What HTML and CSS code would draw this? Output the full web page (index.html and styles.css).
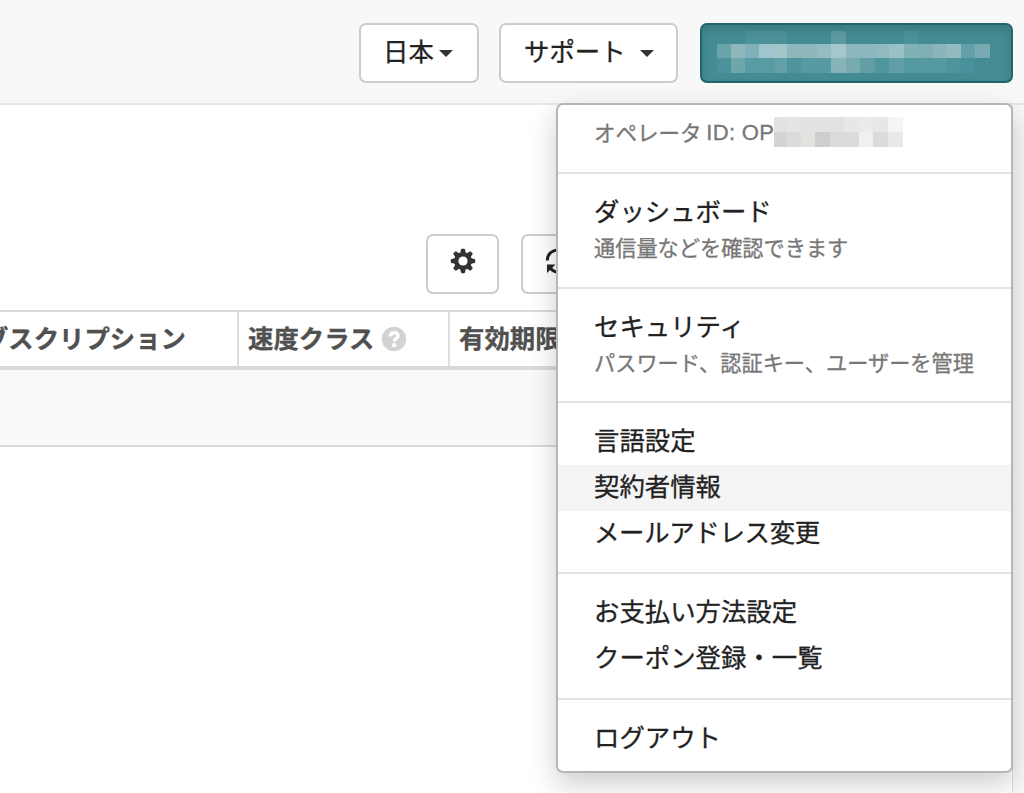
FILE: index.html
```
<!DOCTYPE html>
<html lang="ja">
<head>
<meta charset="utf-8">
<title>ユーザーコンソール</title>
<link rel="stylesheet" href="styles.css">
</head>
<body>
<div class="page">
  <header class="topbar">
    <button class="btn btn-lang">日本<span class="caret"></span></button>
    <button class="btn btn-support">サポート<span class="caret"></span></button>
    <button class="btn btn-account" aria-label="アカウント">
      <svg width="311" height="58" viewBox="0 0 311 58" shape-rendering="crispEdges">
        <g fill="#fff">
          <path opacity=".05" d="M43 7h43v13H43zM203 7h14v13h-14z"/>
          <path opacity=".13" d="M130 7h15v13h-15z"/>
        </g>
        <g>
          <path fill="#69a4ab" d="M15 20h14v14H15z"/><path fill="#8eb7bb" d="M29 20h14v14H29z"/>
          <path fill="#80b1b8" d="M43 20h14v14H43z"/><path fill="#a0c5ce" d="M57 20h15v14H57z"/>
          <path fill="#a3c6ca" d="M72 20h14v14H72z"/><path fill="#8eb7bc" d="M86 20h30v14H86z"/>
          <path fill="#94bcc2" d="M116 20h14v14h-14z"/><path fill="#a5c6cb" d="M130 20h15v14h-15z"/>
          <path fill="#8db7bf" d="M145 20h29v14h-29z"/><path fill="#91bac0" d="M174 20h14v14h-14z"/>
          <path fill="#99c1c8" d="M188 20h15v14h-15z"/><path fill="#81b1b5" d="M203 20h14v14h-14z"/>
          <path fill="#7eafb7" d="M217 20h15v14h-15z"/><path fill="#8ab5bb" d="M232 20h14v14h-14z"/>
          <path fill="#91bbc0" d="M246 20h15v14h-15z"/><path fill="#64a0a8" d="M261 20h14v14h-14z"/>
          <path fill="#77abb1" d="M275 20h15v14h-15z"/>
          <path fill="#4a939b" d="M15 34h14v15H15z"/><path fill="#6ea6ac" d="M29 34h14v15H29z"/>
          <path fill="#599ba2" d="M43 34h29v15H43z"/><path fill="#629fa6" d="M72 34h14v15H72z"/>
          <path fill="#4f949e" d="M86 34h15v15H86z"/><path fill="#579aa3" d="M101 34h29v15h-29z"/>
          <path fill="#86b4b9" d="M130 34h15v15h-15z"/><path fill="#78abb1" d="M145 34h14v15h-14z"/>
          <path fill="#619fa5" d="M159 34h15v15h-15z"/><path fill="#50969f" d="M174 34h14v15h-14z"/>
          <path fill="#619fa8" d="M188 34h15v15h-15z"/><path fill="#5599a1" d="M203 34h43v15h-43z"/>
          <path fill="#4e949c" d="M246 34h15v15h-15z"/><path fill="#48909a" d="M261 34h14v15h-14z"/>
        </g>
      </svg>
    </button>
  </header>

  <main class="content">
    <div class="toolbar">
      <button class="btn btn-icon" aria-label="設定">
        <svg width="26" height="26" viewBox="-13 -13 26 26">
          <g fill="#333">
            <g id="teeth">
              <path d="M-2.7-8L-2-11.4Q-1.8-12.2-1-12.2H1Q1.8-12.2 2-11.4L2.7-8V8L2 11.4Q1.8 12.2 1 12.2H-1Q-1.8 12.2-2 11.4L-2.7 8z"/>
            </g>
            <use href="#teeth" transform="rotate(45)"/>
            <use href="#teeth" transform="rotate(90)"/>
            <use href="#teeth" transform="rotate(135)"/>
            <circle r="9"/>
          </g>
          <circle r="4.6" fill="#fff"/>
        </svg>
      </button>
      <button class="btn btn-icon" aria-label="更新">
        <svg width="26" height="26" viewBox="0 0 26 26">
          <g fill="none" stroke="#222" stroke-width="3">
            <path d="M2.300 12.500A10.500 10.500 0 0 1 21 6"/>
            <path d="M23.700 14A10.500 10.500 0 0 1 5.500 20.500"/>
          </g>
          <path fill="#222" d="M2 16.500h8.500L2 25zM24 9.500h-8.500L24 1z"/>
        </svg>
      </button>
    </div>
    <div class="table">
      <div class="thead">
        <div class="th th-sub"><span>サブスクリプション</span></div>
        <div class="th th-speed">速度クラス
          <svg class="help" width="26" height="26" viewBox="0 0 26 26">
            <circle cx="13" cy="13" r="12.200" fill="#d3d3d3"/>
            <path d="M9.300 10.300Q9.600 6.700 13.200 6.700Q17 6.700 17 9.700Q17 11.500 14.900 12.700Q13.200 13.600 13.200 15.600" fill="none" stroke="#fff" stroke-width="3.400"/>
            <path d="M11.200 17.300h4v3.700h-4z" fill="#fff"/>
          </svg>
        </div>
        <div class="th th-expiry">有効期限</div>
      </div>
      <div class="row-empty"></div>
    </div>
  </main>

  <nav class="menu">
    <div class="section operator">オペレータ <span class="latin">ID: OP</span><svg width="129" height="30" viewBox="0 0 129 30" shape-rendering="crispEdges">
      <path fill="#e2e2e2" d="M0 0h13v15H0zM27 0h43v15H27z"/><path fill="#e6e4e2" d="M13 0h14v15H13z"/>
      <path fill="#e7e7e7" d="M70 0h15v15H70zM99 0h15v15H99z"/><path fill="#ebebeb" d="M85 0h14v15H85z"/><path fill="#f5f5f5" d="M114 0h15v15h-15z"/>
      <path fill="#d3d3d3" d="M0 15h12v15H0z"/><path fill="#dbdbdb" d="M12 15h15v15H12zM56 15h29v15H56zM99 15h15v15H99z"/>
      <path fill="#e4e2df" d="M27 15h14v15H27z"/><path fill="#cecece" d="M41 15h15v15H41z"/>
      <path fill="#f0f0f0" d="M85 15h14v15H85z"/><path fill="#e7e9ec" d="M114 15h15v15h-15z"/></svg></div>
    <a class="section described"><span class="title">ダッシュボード</span><small>通信量などを確認できます</small></a>
    <a class="section described"><span class="title">セキュリティ</span><small>パスワード、認証キー、ユーザーを管理</small></a>
    <div class="section">
      <a class="item">言語設定</a>
      <a class="item active">契約者情報</a>
      <a class="item item-mail">メールアドレス変更</a>
    </div>
    <div class="section">
      <a class="item">お支払い方法設定</a>
      <a class="item">クーポン登録・一覧</a>
    </div>
    <div class="section last">
      <a class="item">ログアウト</a>
    </div>
  </nav>
</div>
</body>
</html>
```
FILE: styles.css
```
* { box-sizing: border-box; }
body {
  margin: 0;
  color: #222;
  font-family: "Noto Sans CJK JP", sans-serif;
  font-size: 25.4px;
  -webkit-text-stroke: .3px currentColor;
}
.page {
  position: relative;
  width: 1024px;
  height: 793px;
  overflow: hidden;
  background: #f8f8f8;
}
.topbar {
  display: flex;
  justify-content: flex-end;
  height: 105px;
  padding: 23px 11px 0 0;
  border-bottom: 2px solid #e7e7e7;
}
.btn {
  display: flex;
  align-items: center;
  height: 60px;
  padding: 0 0 4px 23px;
  border: 2px solid #ccc;
  border-radius: 7px;
  background: #fff;
  color: #222;
  font: inherit;
  line-height: 1;
  white-space: nowrap;
}
.btn-lang { width: 120px; margin-right: 20px; padding-left: 22px; }
.btn-support { width: 179px; margin-right: 22px; }
.caret {
  margin: 5px 0 0 5px;
  border: 7px solid transparent;
  border-top-color: #333;
  border-bottom: 0;
}
.btn-support .caret { margin-left: 14px; }
.btn-account {
  width: 313px;
  padding: 0;
  border-color: #24646a;
  background: #438c93;
  box-shadow: inset 0 5px 8px rgba(0, 0, 0, .125);
}
.content {
  width: 1013px;
  height: 688px;
  padding-top: 129px;
  border-right: 1px solid #ddd;
  background: #fff;
}
.toolbar {
  display: flex;
  gap: 22px;
  padding-left: 426px;
}
.btn-icon {
  justify-content: center;
  width: 73px;
  padding: 0 0 6px;
}
.table { margin-top: 16px; border-bottom: 2px solid #d9d9d9; }
.thead {
  display: flex;
  height: 60px;
  border-top: 2px solid #d9d9d9;
  border-bottom: 4px solid #dadada;
}
.th {
  display: flex;
  align-items: center;
  padding: 0 0 3px 9px;
  color: #505050;
  font-weight: 700;
  line-height: 1;
  white-space: nowrap;
}
.th-sub {
  justify-content: flex-end;
  width: 239px;
  padding-right: 51px;
  overflow: hidden;
}
.th-speed { width: 211px; }
.th-sub, .th-speed { border-right: 2px solid #ddd; }
.help { margin: 2px 0 0 7px; }
.row-empty { height: 75px; background: #f9f9f9; }
.menu {
  position: absolute;
  top: 103px;
  left: 556px;
  width: 457px;
  height: 670px;
  border: 2px solid #b5b7b7;
  border-radius: 7px;
  background: #fff;
  box-shadow: 0 11px 28px rgba(0, 0, 0, .2);
}
.section {
  display: block;
  padding: 16px 0;
  border-bottom: 2px solid #e3e3e3;
}
.section.last { border-bottom: 0; }
.operator {
  display: flex;
  align-items: flex-start;
  height: 69px;
  padding: 12px 0 0 36px;
  color: #777;
  font-size: 21.500px;
  line-height: 30px;
  white-space: pre;
}
.latin {
  padding-top: 1px;
  font-family: "Liberation Sans", sans-serif;
  font-size: 22px;
  letter-spacing: .3px;
}
.described {
  height: 114.700px;
  padding: 14px 0 0 36px;
}
.title { display: block; line-height: 44px; }
small {
  display: block;
  color: #777;
  font-size: 21.200px;
  line-height: 29px;
}
.item {
  display: block;
  height: 45.700px;
  padding-left: 36px;
  line-height: 41px;
}
.item-mail { letter-spacing: -.3px; }
.active { background: #f4f4f4; }
```
